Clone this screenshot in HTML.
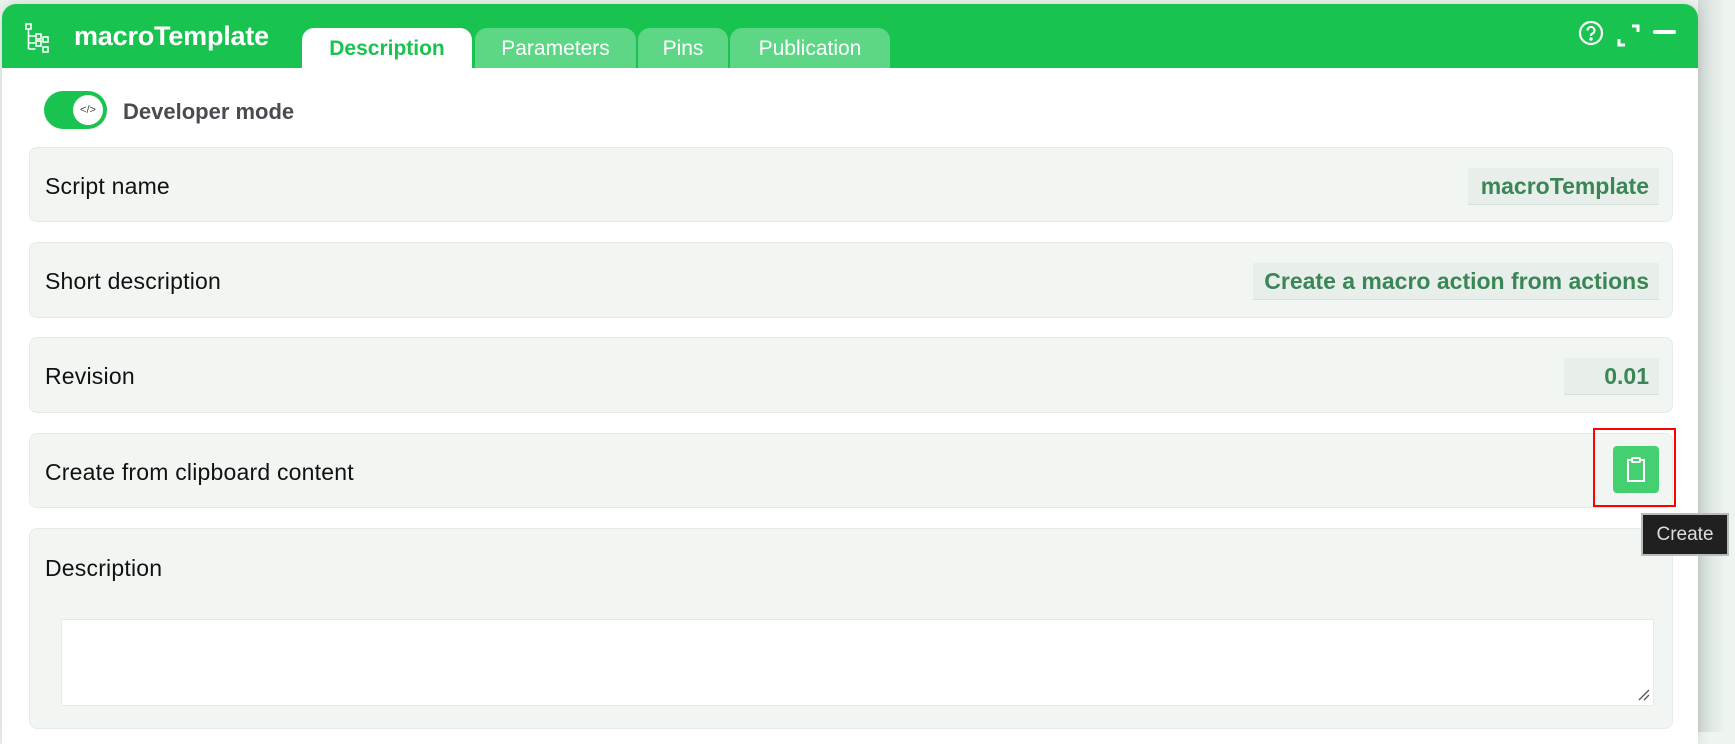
<!DOCTYPE html>
<html><head><meta charset="utf-8"><style>
*{box-sizing:border-box;margin:0;padding:0}
body{width:1735px;height:732px;overflow:hidden;background:#eef5f0;font-family:"Liberation Sans",sans-serif;position:relative}
.shade{position:absolute;left:1698px;top:0;width:40px;height:732px;background:linear-gradient(90deg,#d3dcd7,#eef5f0 70%)}
.panel{position:absolute;left:2px;top:4px;width:1696px;height:740px;background:#fff;border-radius:14px 14px 0 0;overflow:hidden;box-shadow:0 0 14px rgba(0,0,0,.15)}
.hdr{position:absolute;left:0;top:0;width:100%;height:64px;background:#19c350}
.title{position:absolute;left:72px;top:17px;color:#fff;font-weight:bold;font-size:27px;letter-spacing:-.2px}
.tab{position:absolute;top:24px;height:40px;border-radius:12px 12px 0 0;background:#5dd785;color:#fff;font-size:21px;text-align:center;line-height:42px;white-space:nowrap}
.tab.a{background:#fff;color:#19c350;font-weight:bold}
.row{position:absolute;left:29px;width:1644px;background:#f2f6f3;border:1px solid #e6ebe7;border-radius:8px}
.lbl{position:absolute;left:15px;font-size:23px;color:#111;white-space:nowrap;letter-spacing:.2px}
.val{position:absolute;right:13px;top:20px;height:37px;background:#e8efea;border-bottom:1px solid #d4e2d8;color:#3b8656;font-weight:bold;font-size:23px;line-height:37px;padding:0 10px;white-space:nowrap}
</style></head><body>
<div class="shade"></div>
<div class="panel">
 <div class="hdr">
  <svg style="position:absolute;left:23px;top:19px" width="26" height="32" viewBox="0 0 26 32" fill="none" stroke="#fff" stroke-width="1.6"><rect x="1" y="1" width="5" height="5"/><path d="M3.5 6v20M3.5 13h7M3.5 20h7M3.5 26h7"/><rect x="11" y="11" width="5" height="5"/><rect x="11" y="18" width="5" height="5"/><rect x="18" y="14" width="5" height="5"/><rect x="18" y="24" width="5" height="5"/></svg>
  <div class="title">macroTemplate</div>
  <div class="tab a" style="left:300px;width:170px">Description</div>
  <div class="tab" style="left:473px;width:161px">Parameters</div>
  <div class="tab" style="left:636px;width:90px">Pins</div>
  <div class="tab" style="left:728px;width:160px">Publication</div>
  <svg style="position:absolute;left:1576px;top:16px" width="26" height="26" viewBox="0 0 26 26" fill="none" stroke="#fff" stroke-width="2.2"><circle cx="13" cy="13" r="11"/><path d="M9.5 10.5a3.5 3.5 0 1 1 4.5 3.3c-1 .4-1 1-1 2.2"/><circle cx="13" cy="19" r=".6" fill="#fff"/></svg>
  <svg style="position:absolute;left:1614px;top:19px" width="26" height="26" viewBox="0 0 26 26" fill="none" stroke="#fff" stroke-width="3"><path d="M16 3h6v6M3 16v6h6"/></svg>
  <div style="position:absolute;left:1651px;top:26px;width:23px;height:4px;border-radius:2px;background:#fff"></div>
 </div>
 <div style="position:absolute;left:42px;top:87px;width:63px;height:38px;border-radius:19px;background:#19c350"></div>
 <div style="position:absolute;left:71px;top:91px;width:30px;height:30px;border-radius:15px;background:#fff;font-size:11px;color:#444;text-align:center;line-height:30px">&lt;/&gt;</div>
 <div style="position:absolute;left:121px;top:95px;font-size:22px;font-weight:bold;color:#4a4a50">Developer mode</div>
</div>
<div class="row" style="top:147px;height:75px"><div class="lbl" style="top:25px">Script name</div><div class="val" style="width:191px;text-align:right">macroTemplate</div></div>
<div class="row" style="top:242px;height:76px"><div class="lbl" style="top:25px">Short description</div><div class="val" style="width:406px;text-align:right">Create a macro action from actions</div></div>
<div class="row" style="top:337px;height:76px"><div class="lbl" style="top:25px">Revision</div><div class="val" style="width:95px;text-align:right">0.01</div></div>
<div class="row" style="top:433px;height:75px"><div class="lbl" style="top:25px">Create from clipboard content</div></div>
<div class="row" style="top:528px;height:201px"><div class="lbl" style="top:26px">Description</div>
 <div style="position:absolute;left:31px;top:90px;width:1593px;height:87px;background:#fff;border:1px solid #e6ebe7"></div>
 <svg style="position:absolute;left:1608px;top:160px" width="12" height="12" stroke="#555" stroke-width="1.3"><path d="M1 11L11 1M6 11l5-5"/></svg>
</div>
<div style="position:absolute;left:1593px;top:428px;width:83px;height:79px;border:2.5px solid #f00"></div>
<div style="position:absolute;left:1613px;top:446px;width:46px;height:47px;border-radius:4px;background:#44cf70"></div>
<svg style="position:absolute;left:1625px;top:456px" width="22" height="27" viewBox="0 0 22 27" fill="none" stroke="#fff" stroke-width="2"><path d="M7 4H3v21h16V4h-4"/><rect x="7" y="2" width="8" height="4" rx="1"/></svg>
<div style="position:absolute;left:1641px;top:513px;width:88px;height:43px;background:#202020;border:2px solid #bbb;color:#ddd;font-size:19px;line-height:39px;text-align:center">Create</div>
</body></html>
